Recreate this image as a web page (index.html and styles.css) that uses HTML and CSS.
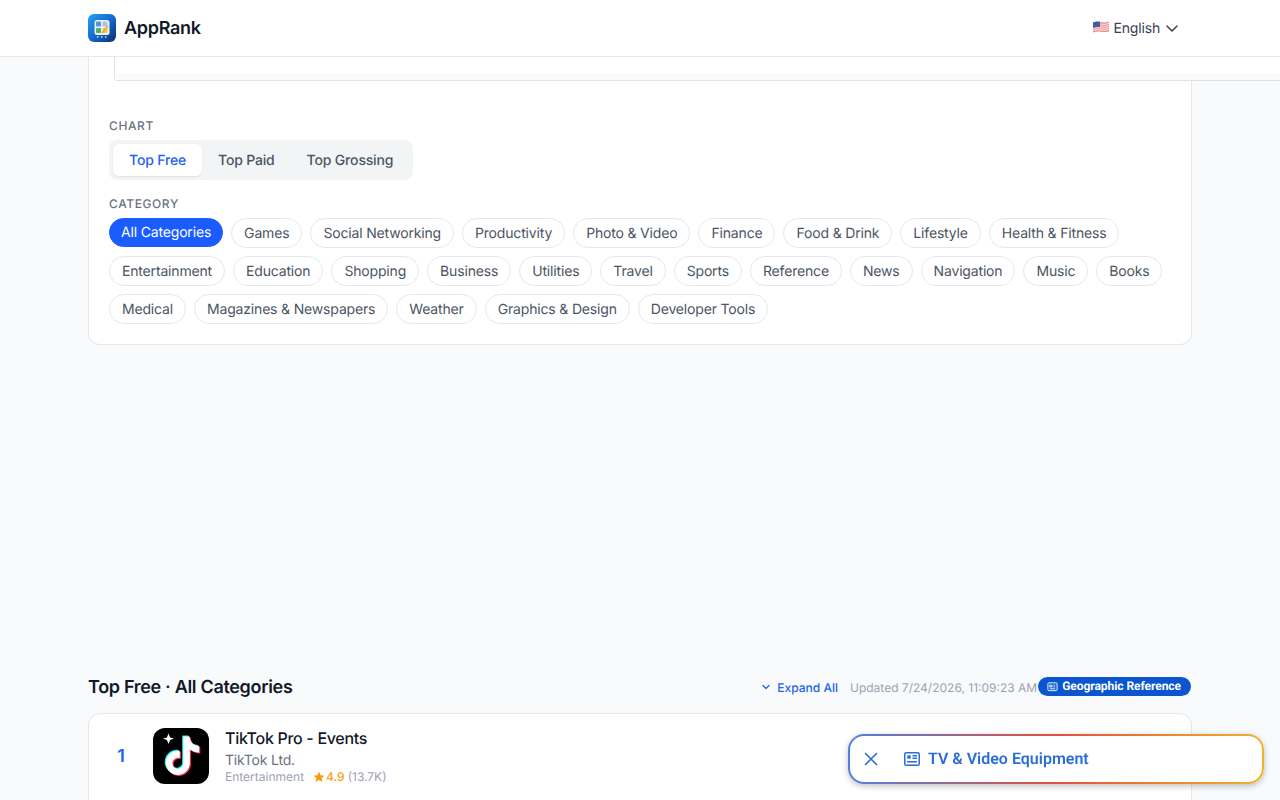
FILE: index.html
```html
<!DOCTYPE html>
<html lang="en">
<head>
    <meta charset="UTF-8">
    <meta name="viewport" content="width=device-width, initial-scale=1.0">
    <title>AppRank</title>
    <link rel="stylesheet" href="styles.css">
</head>
<body>
    <header class="topbar">
        <div class="container topbar-inner">
            <div class="brand">
                <svg class="brand-logo" width="28" height="28" viewBox="0 0 28 28">
                    <defs>
                        <linearGradient id="logoBg" x1="0" y1="0" x2="1" y2="1">
                            <stop offset="0" stop-color="#1fa2f3"/>
                            <stop offset="0.55" stop-color="#1464c8"/>
                            <stop offset="1" stop-color="#0b2c6e"/>
                        </linearGradient>
                    </defs>
                    <rect width="28" height="28" rx="6" fill="url(#logoBg)"/>
                    <rect x="6.5" y="6" width="15" height="15" rx="2.5" fill="#e9f1fb"/>
                    <rect x="8" y="7.5" width="5" height="5" rx="1" fill="#5b8fe0"/>
                    <rect x="14.5" y="7.5" width="5" height="5" rx="1" fill="#a9c4ee"/>
                    <rect x="8" y="14" width="5" height="5" rx="1" fill="#4caf6a"/>
                    <rect x="14.5" y="14" width="5" height="5" rx="1" fill="#f5c542"/>
                    <path d="M14 19l6-7" stroke="#f0a830" stroke-width="1.6" fill="none"/>
                    <path d="M9 23h1.5M13 23h1.5M17 23h1.5" stroke="#cfe0f6" stroke-width="1.5"/>
                </svg>
                <span class="brand-name">AppRank</span>
            </div>
            <button class="lang">
                <svg class="flag" width="16" height="12" viewBox="0 0 16 12">
                    <path d="M0 1.5Q4 0 8 1t8-.5v10q-4 1-8 .3t-8 .7z" fill="#ef8a8a"/>
                    <path d="M0 3.4Q4 2 8 3t8-.5M0 5.4Q4 4 8 5t8-.5M0 7.4Q4 6 8 7t8-.5M0 9.4Q4 8 8 9t8-.5" stroke="#f6e9ea" stroke-width="1" fill="none"/>
                    <path d="M0 1.5Q3.500.2 7 .8v5.300q-3.500-.4-7 .5z" fill="#3f5fa8"/>
                </svg>
                <span>English</span>
                <svg class="chevron" width="12" height="7" viewBox="0 0 12 7"><path d="M1 1l5 5 5-5" fill="none" stroke="#374151" stroke-width="1.5" stroke-linecap="round" stroke-linejoin="round"/></svg>
            </button>
        </div>
    </header>

    <main class="container">
        <section class="filters">
            <div class="overflow-box"><div class="overflow-strip"></div></div>

            <div class="filter-label chart-label">Chart</div>
            <div class="tabs">
                <button class="tab active">Top Free</button>
                <button class="tab">Top Paid</button>
                <button class="tab">Top Grossing</button>
            </div>

            <div class="filter-label category-label">Category</div>
            <div class="chips">
                <button class="chip active">All Categories</button>
                <button class="chip">Games</button>
                <button class="chip">Social Networking</button>
                <button class="chip">Productivity</button>
                <button class="chip">Photo &amp; Video</button>
                <button class="chip">Finance</button>
                <button class="chip">Food &amp; Drink</button>
                <button class="chip">Lifestyle</button>
                <button class="chip">Health &amp; Fitness</button>
                <button class="chip">Entertainment</button>
                <button class="chip">Education</button>
                <button class="chip">Shopping</button>
                <button class="chip">Business</button>
                <button class="chip">Utilities</button>
                <button class="chip">Travel</button>
                <button class="chip">Sports</button>
                <button class="chip">Reference</button>
                <button class="chip">News</button>
                <button class="chip">Navigation</button>
                <button class="chip">Music</button>
                <button class="chip">Books</button>
                <button class="chip">Medical</button>
                <button class="chip">Magazines &amp; Newspapers</button>
                <button class="chip">Weather</button>
                <button class="chip">Graphics &amp; Design</button>
                <button class="chip">Developer Tools</button>
            </div>
        </section>

        <section class="results">
            <div class="results-head">
                <h2>Top Free · All Categories</h2>
                <div class="results-tools">
                    <button class="expand">
                        <svg width="8" height="6" viewBox="0 0 8 6"><path d="M1 1.500l3 3 3-3" fill="none" stroke="#2563eb" stroke-width="1.300" stroke-linecap="round" stroke-linejoin="round"/></svg>
                        Expand All
                    </button>
                    <span class="updated">Updated 7/24/2026, 11:09:23 AM</span>
                    <span class="geo-tag">
                        <svg width="11" height="11" viewBox="0 0 24 24" fill="none" stroke="#fff" stroke-width="2"><rect x="2" y="4" width="20" height="17" rx="2"/><path d="M6 9h5v4H6zM14 9h4M14 13h4M6 17h12"/></svg>
                        Geographic Reference
                    </span>
                </div>
            </div>

            <div class="app-list">
                <div class="app-row">
                    <div class="rank">1</div>
                    <svg class="app-icon" width="56" height="56" viewBox="0 0 56 56">
                        <rect width="56" height="56" rx="12" fill="#000"/>
                        <g transform="translate(9.200 7.500) scale(1.600)">
                            <path fill="#25f4ee" d="M12.525.02c1.310-.02 2.610-.01 3.910-.02.080 1.530.630 3.090 1.750 4.170 1.120 1.110 2.700 1.620 4.240 1.790v4.030c-1.440-.05-2.890-.35-4.200-.97-.57-.26-1.100-.59-1.620-.93-.01 2.920.01 5.840-.02 8.750-.08 1.400-.54 2.790-1.350 3.940-1.310 1.920-3.580 3.170-5.910 3.210-1.430.080-2.860-.31-4.080-1.030-2.020-1.190-3.440-3.370-3.650-5.710-.02-.5-.03-1-.01-1.490.180-1.900 1.120-3.720 2.580-4.960 1.660-1.440 3.980-2.130 6.150-1.720.020 1.480-.04 2.960-.04 4.440-.99-.32-2.150-.23-3.020.370-.63.410-1.110 1.040-1.360 1.750-.21.510-.15 1.070-.14 1.610.240 1.640 1.820 3.020 3.500 2.870 1.120-.01 2.190-.66 2.770-1.610.190-.33.400-.67.410-1.060.100-1.790.060-3.570.070-5.360.010-4.030-.01-8.050.020-12.070z"/>
                        </g>
                        <g transform="translate(11.400 9.500) scale(1.600)">
                            <path fill="#fe2c55" d="M12.525.02c1.310-.02 2.610-.01 3.910-.02.080 1.530.630 3.090 1.750 4.170 1.120 1.110 2.700 1.620 4.240 1.790v4.030c-1.440-.05-2.890-.35-4.200-.97-.57-.26-1.100-.59-1.620-.93-.01 2.920.01 5.840-.02 8.750-.08 1.400-.54 2.790-1.350 3.940-1.310 1.920-3.580 3.170-5.910 3.210-1.430.080-2.860-.31-4.080-1.030-2.020-1.190-3.440-3.370-3.650-5.710-.02-.5-.03-1-.01-1.490.180-1.900 1.120-3.720 2.580-4.960 1.660-1.440 3.980-2.130 6.150-1.720.020 1.480-.04 2.960-.04 4.440-.99-.32-2.150-.23-3.020.370-.63.410-1.110 1.040-1.360 1.750-.21.510-.15 1.070-.14 1.610.240 1.640 1.820 3.020 3.500 2.870 1.120-.01 2.190-.66 2.770-1.610.190-.33.400-.67.410-1.060.100-1.790.060-3.570.070-5.360.010-4.030-.01-8.050.020-12.070z"/>
                        </g>
                        <g transform="translate(10.300 8.500) scale(1.600)">
                            <path fill="#fff" d="M12.525.02c1.310-.02 2.610-.01 3.910-.02.080 1.530.630 3.090 1.750 4.170 1.120 1.110 2.700 1.620 4.240 1.790v4.030c-1.440-.05-2.890-.35-4.200-.97-.57-.26-1.100-.59-1.620-.93-.01 2.920.01 5.840-.02 8.750-.08 1.400-.54 2.790-1.350 3.940-1.310 1.920-3.580 3.170-5.910 3.210-1.430.080-2.860-.31-4.080-1.030-2.020-1.190-3.440-3.370-3.650-5.710-.02-.5-.03-1-.01-1.490.180-1.900 1.120-3.720 2.580-4.960 1.660-1.440 3.980-2.130 6.150-1.720.020 1.480-.04 2.960-.04 4.440-.99-.32-2.150-.23-3.020.370-.63.410-1.110 1.040-1.360 1.750-.21.510-.15 1.070-.14 1.610.240 1.640 1.820 3.020 3.500 2.870 1.120-.01 2.190-.66 2.770-1.610.190-.33.400-.67.410-1.060.100-1.790.060-3.570.070-5.360.010-4.030-.01-8.050.020-12.070z"/>
                        </g>
                        <path d="M15.500 5.500l1.600 3.900 3.900 1.100-3.900 1.500-1.600 4-1.600-4-3.900-1.500 3.900-1.100z" fill="#fff"/>
                    </svg>
                    <div class="app-info">
                        <div class="app-title">TikTok Pro - Events</div>
                        <div class="app-dev">TikTok Ltd.</div>
                        <div class="app-meta">
                            <span class="app-cat">Entertainment</span>
                            <span class="app-rating">
                                <svg width="12" height="12" viewBox="0 0 24 24"><path fill="#f59e0b" d="M12 1.500l3.200 6.900 7.500.9-5.500 5.100 1.500 7.400L12 18.100l-6.700 3.700 1.500-7.400L1.300 9.300l7.500-.9z"/></svg>
                                <b>4.9</b>
                                <span class="rating-count">(13.7K)</span>
                            </span>
                        </div>
                    </div>
                </div>
            </div>
        </section>
    </main>

    <div class="float-pill">
        <button class="pill-close">
            <svg width="14" height="14" viewBox="0 0 14 14"><path d="M1.500 1.500l11 11M12.500 1.500l-11 11" stroke="#2b6fd6" stroke-width="1.700" stroke-linecap="round"/></svg>
        </button>
        <svg class="pill-icon" width="16" height="14" viewBox="0 0 16 14" fill="none" stroke="#2b6fd6" stroke-width="1.500"><rect x="0.750" y="0.750" width="14.500" height="12.500" rx="1.500"/><rect x="3.300" y="3.300" width="3.400" height="3.400" fill="#2b6fd6" stroke="none"/><path d="M8.500 3.800h4.500M8.500 6.300h4.500M3 9.800h10"/></svg>
        <span class="pill-text">TV &amp; Video Equipment</span>
    </div>
</body>
</html>
```

FILE: styles.css
```css
* {
    box-sizing: border-box;
}
html, body {
    height: 800px;
    overflow: hidden;
}
body {
    margin: 0;
    background: #f9fafb;
    color: #111827;
    font-family: Inter, "Liberation Sans", sans-serif;
    text-rendering: geometricPrecision;
}
button {
    font-family: inherit;
    border: none;
    background: none;
    padding: 0;
    text-rendering: inherit;
}
.container {
    width: 1104px;
    margin: 0 auto;
}

/* header */
.topbar {
    height: 57px;
    background: #fff;
    border-bottom: 1px solid #e5e7eb;
}
.topbar-inner {
    height: 56px;
    display: flex;
    align-items: center;
    justify-content: space-between;
}
.brand {
    display: flex;
    align-items: center;
    gap: 8px;
}
.brand-name {
    font-size: 18px;
    font-weight: 600;
    letter-spacing: -0.3px;
}
.lang {
    display: flex;
    align-items: center;
    margin-right: 14px;
    font-size: 14px;
    letter-spacing: -0.17px;
    color: #374151;
}
.flag {
    margin-right: 4px;
    position: relative;
    top: -1px;
}
.chevron {
    margin-left: 6px;
}

/* filters */
.filters {
    position: relative;
    padding: 0 20px 20px;
    background: #fff;
    border: 1px solid #e5e7eb;
    border-top: none;
    border-radius: 0 0 12px 12px;
}
.overflow-box {
    width: 1200px;
    height: 24px;
    margin-left: 5px;
    display: flex;
    align-items: flex-end;
    background: #fff;
    border: 1px solid #e0e2e6;
    border-top: none;
    border-radius: 0 0 0 4px;
}
.overflow-strip {
    width: 100%;
    height: 7px;
    background: #f9fafb;
}
.filter-label {
    font-size: 12px;
    font-weight: 500;
    line-height: 16px;
    letter-spacing: 0.05em;
    text-transform: uppercase;
    color: #6b7280;
}
.chart-label {
    margin-top: 37px;
    margin-bottom: 6px;
}
.category-label {
    margin-top: 16px;
    margin-bottom: 6px;
}
.tabs {
    display: inline-flex;
    padding: 4px;
    background: #f3f4f6;
    border-radius: 8px;
    vertical-align: top;
}
.tab {
    height: 32px;
    padding: 0 16px;
    font-size: 14px;
    font-weight: 500;
    letter-spacing: -0.17px;
    color: #4b5563;
    border-radius: 6px;
}
.tab.active {
    background: #fff;
    color: #2563eb;
    box-shadow: 0 1px 2px rgba(0, 0, 0, 0.08);
}
.chips {
    display: flex;
    flex-wrap: wrap;
    align-items: flex-start;
    gap: 8px;
}
.chip {
    height: 30px;
    padding: 0 12px;
    font-size: 14px;
    letter-spacing: -0.17px;
    color: #4b5563;
    background: #fff;
    border: 1px solid #e5e7eb;
    border-radius: 15px;
}
.chip.active {
    height: 29px;
    background: #1a5cff;
    border-color: #1a5cff;
    color: #fff;
    padding: 0 11px;
}

/* results */
.results {
    margin-top: 328px;
}
.results-head {
    height: 28px;
    margin-bottom: 12px;
    display: flex;
    align-items: center;
    justify-content: space-between;
}
.results-head h2 {
    margin: 0;
    font-size: 18px;
    font-weight: 600;
    letter-spacing: -0.32px;
}
.results-tools {
    display: flex;
    align-items: center;
    font-size: 12px;
}
.expand {
    display: flex;
    align-items: center;
    gap: 7px;
    margin-right: 12px;
    font-size: 12px;
    font-weight: 500;
    color: #2563eb;
}
.updated {
    color: #9ca3af;
}
.geo-tag {
    display: flex;
    align-items: center;
    gap: 4px;
    height: 19px;
    margin: -2px 1px 0;
    padding: 0 10px 0 9px;
    background: #0b55cf;
    border-radius: 10px;
    color: #fff;
    font-family: Roboto, sans-serif;
    font-weight: 700;
    letter-spacing: -0.05px;
}
.app-list {
    background: #fff;
    border: 1px solid #e5e7eb;
    border-radius: 12px;
    height: 300px;
}
.app-row {
    display: flex;
    align-items: center;
    gap: 16px;
    padding: 14px 16px;
}
.rank {
    width: 32px;
    text-align: center;
    font-size: 18px;
    font-weight: 600;
    color: #2563eb;
}
.app-title {
    font-size: 16px;
    font-weight: 500;
    line-height: 20px;
    letter-spacing: -0.3px;
}
.app-dev {
    font-size: 14px;
    line-height: 20px;
    margin-top: 3px;
    letter-spacing: -0.18px;
    color: #6b7280;
}
.app-meta {
    display: flex;
    align-items: center;
    gap: 9px;
    margin-top: -1px;
    font-size: 12px;
    line-height: 14px;
    color: #9ca3af;
}
.app-rating {
    display: flex;
    align-items: center;
    gap: 1px;
}
.app-rating b {
    font-weight: 500;
    color: #f59e0b;
}
.rating-count {
    margin-left: 2px;
}

/* floating pill */
.float-pill {
    position: fixed;
    left: 848px;
    top: 734px;
    width: 416px;
    height: 50px;
    display: flex;
    align-items: center;
    padding-left: 14px;
    border: 2px solid transparent;
    border-radius: 16px;
    background: linear-gradient(#fff, #fff) padding-box,
        linear-gradient(90deg, #4f7fe0 0%, #e2503f 50%, #f0b429 100%) border-box;
    box-shadow: 0 2px 6px rgba(0, 0, 0, 0.25);
}
.pill-close {
    display: flex;
    margin-right: 26px;
}
.pill-icon {
    margin-right: 8px;
}
.pill-text {
    margin-bottom: 2px;
    font-family: Roboto, sans-serif;
    font-size: 16px;
    font-weight: 600;
    color: #2b6fd6;
}
```
